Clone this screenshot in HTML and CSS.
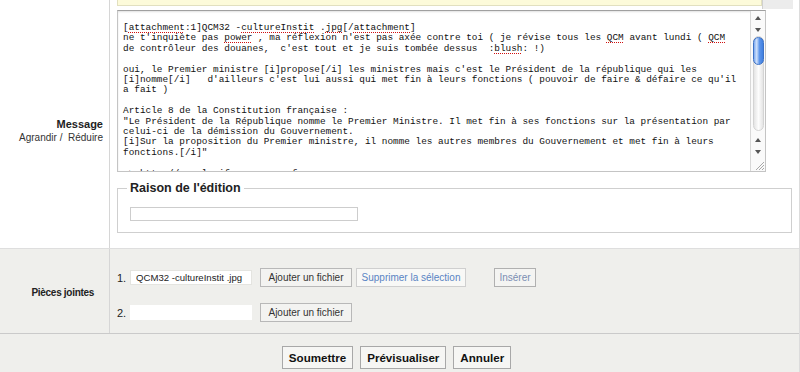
FILE: index.html
```html
<!DOCTYPE html>
<html>
	<head>
		<title>Modifier le message</title>
		<link rel="stylesheet" href="styles.css">
	</head>

	<body>
		<form class="page" name="formulaire">

			<div class="row row_message">
				<div class="row_label">
					<b class="label_titre">Message</b>
					<span class="label_sous">Agrandir /&nbsp; Réduire</span>
				</div>

				<div class="row_champ">
					<div class="apercu_fin">
						<div class="apercu_boite"></div>
						<div class="apercu_barre"></div>
					</div>

					<div class="editeur">
<div class="editeur_texte">[<span class="faute">attachment</span>:1]QCM32 -<span class="faute">cultureInstit</span> .<span class="faute">jpg</span>[/<span class="faute">attachment</span>]
ne t'inquiète pas <span class="faute">power</span> , ma réflexion n'est pas axée contre toi ( je révise tous les <span class="faute">QCM</span> avant lundi ( <span class="faute">QCM</span>
de contrôleur des douanes,  c'est tout et je suis tombée dessus  :<span class="faute">blush</span>: !)

oui, le Premier ministre [i]propose[/i] les ministres mais c'est le Président de la république qui les
[i]nomme[/i]   d'ailleurs c'est lui aussi qui met fin à leurs fonctions ( pouvoir de faire &amp; défaire ce qu'il
a fait )

Article 8 de la Constitution française :
"Le Président de la République nomme le Premier Ministre. Il met fin à ses fonctions sur la présentation par
celui-ci de la démission du Gouvernement.
[i]Sur la proposition du Premier ministre, il nomme les autres membres du Gouvernement et met fin à leurs
fonctions.[/i]"

=> http://www.legifrance.gouv.fr
</div>
						<div class="barre">
							<span class="fleche fleche_haut"></span>
							<span class="fleche fleche_bas"></span>
							<div class="barre_piste"><div class="barre_curseur"></div></div>
							<span class="fleche fleche_haut"></span>
							<span class="fleche fleche_bas"></span>
							<svg class="poignee" width="12" height="12" viewBox="0 0 12 12">
								<path d="M11 3 L3 11 M11 6 L6 11 M11 9 L9 11" stroke="#a8a8a8" stroke-width="1" fill="none"/>
							</svg>
						</div>
					</div>

					<fieldset class="raison">
						<legend>Raison de l'édition</legend>
						<input type="text" class="raison_texte">
					</fieldset>
				</div>
			</div>

			<div class="row row_pieces">
				<div class="row_label label_pieces">
					<b class="label_titre">Pièces jointes</b>
				</div>

				<div class="row_champ champ_pieces">
					<div class="piece">
						<span class="piece_num">1.</span>
						<input type="text" class="piece_nom" value="QCM32 -cultureInstit .jpg">
						<input type="button" class="bouton_fichier" value="Ajouter un fichier">
						<input type="button" class="bouton_lien" value="Supprimer la sélection">
						<input type="button" class="bouton_inserer" value="Insérer">
					</div>
					<div class="piece">
						<span class="piece_num">2.</span>
						<input type="text" class="piece_nom piece_vide">
						<input type="button" class="bouton_fichier" value="Ajouter un fichier">
					</div>
				</div>
			</div>

			<div class="envoi">
				<input type="button" class="bouton_envoi" value="Soumettre">
				<input type="button" class="bouton_envoi" value="Prévisualiser">
				<input type="button" class="bouton_envoi" value="Annuler">
			</div>

		</form>
	</body>
</html>
```

FILE: styles.css
```css
	body
	{
		margin: 0;
		background-color: #efefec;
		font-family: "Liberation Sans", Arial, sans-serif;
		color: #222;
	}

	.page
	{
		width: 799px;
		border-right: 1px solid #dcdcdc;
		margin: 0;
	}

	.row
	{
		display: flex;
	}

	.row_label
	{
		width: 110px;
		border-right: 1px solid #d6d6d6;
		display: flex;
		flex-direction: column;
		justify-content: center;
		align-items: flex-end;
		box-sizing: border-box;
		padding-right: 6px;
	}

	.label_titre
	{
		font-size: 11px;
		line-height: 14px;
		color: #222;
	}

	.label_sous
	{
		font-size: 10px;
		line-height: 13px;
		color: #333;
	}

	.row_message
	{
		background-color: white;
		height: 248px;
	}

	.row_message .row_label
	{
		padding-top: 12px;
	}

	.row_champ
	{
		flex: 1;
		padding: 0 6px 0 7px;
	}

	/* fin de l'apercu au dessus */
	.apercu_fin
	{
		display: flex;
		height: 6px;
		margin-bottom: 4px;
	}

	.apercu_boite
	{
		width: 643px;
		background-color: #fdfbda;
		border: 1px solid #e2e0c0;
		border-top: 0px;
	}

	.apercu_barre
	{
		flex: 1;
		background-color: #ececec;
		border-left: 1px solid #d0d0d0;
		margin-top: -1px;
		height: 10px;
	}

	.editeur
	{
		display: flex;
		width: 649px;
		height: 162px;
		box-sizing: border-box;
		border: 1px solid #c4c4c4;
		border-top-color: #a0a0a0;
		box-shadow: inset 0 1px 2px rgba(0,0,0,0.12);
		overflow: hidden;
	}

	.editeur_texte
	{
		flex: 1;
		padding: 12px 0 0 5px;
		white-space: pre;
		font-family: "Liberation Mono", "Courier New", monospace;
		font-size: 9.4px;
		line-height: 10.4px;
		color: #111;
		overflow: hidden;
	}

	.faute
	{
		text-decoration: underline dotted #d01010;
		text-underline-offset: 2px;
	}

	.barre
	{
		width: 14px;
		border-left: 1px solid #d8d8d8;
		background-color: #fafafa;
		display: flex;
		flex-direction: column;
		align-items: center;
		padding-top: 1px;
	}

	.fleche
	{
		height: 12px;
		width: 14px;
		display: flex;
		justify-content: center;
		align-items: center;
	}

	.fleche::before
	{
		content: "";
		border-left: 3px solid transparent;
		border-right: 3px solid transparent;
	}

	.fleche_haut::before
	{
		border-bottom: 4px solid #555;
	}

	.fleche_bas::before
	{
		border-top: 4px solid #555;
	}

	.barre_piste
	{
		flex: 1;
		width: 11px;
		margin-bottom: 3px;
		border: 1px solid #d4d4d4;
		border-radius: 6px;
		box-sizing: border-box;
		background: linear-gradient(to right, #e4e4e4, #fdfdfd 50%, #e4e4e4);
	}

	.barre_curseur
	{
		height: 26px;
		margin: 0 -1px;
		border: 1px solid #3d72c6;
		border-radius: 6px;
		background: linear-gradient(to right, #7eaaf0, #cfe1fb 30%, #5d95ea 60%, #3f7fe0);
	}

	.poignee
	{
		margin: 1px 0 0 1px;
	}

	.raison
	{
		width: 675px;
		box-sizing: border-box;
		margin: 9px 0 0 0;
		padding: 11px 12px 11px 12px;
		border: 1px solid #cfcfcf;
	}

	.raison legend
	{
		font-size: 12.5px;
		line-height: 15px;
		font-weight: bold;
		color: #222;
		padding: 0 3px;
		margin-left: -3px;
	}

	.raison_texte
	{
		display: block;
		width: 228px;
		height: 14px;
		box-sizing: border-box;
		margin: 0;
		border: 1px solid #cdcdcd;
		padding: 0;
	}

	.row_pieces
	{
		border-top: 1px solid #dedede;
	}

	.label_pieces
	{
		padding-right: 15px;
		padding-top: 3px;
	}

	.label_pieces .label_titre
	{
		font-size: 10px;
		letter-spacing: -0.3px;
	}

	.champ_pieces
	{
		padding-top: 19px;
		padding-bottom: 11px;
		display: flex;
		flex-direction: column;
		gap: 16px;
	}

	.piece
	{
		display: flex;
		align-items: center;
		height: 19px;
	}

	.piece_num
	{
		width: 13px;
		font-size: 11px;
		color: #222;
	}

	input[type="text"].piece_nom
	{
		width: 122px;
		height: 15px;
		box-sizing: border-box;
		margin: 0 8px 0 0;
		padding: 0 5px;
		border: 1px solid #e4e4e0;
		background-color: white;
		font-family: "Liberation Sans", Arial, sans-serif;
		font-size: 9.6px;
		color: #222;
	}

	input[type="text"].piece_vide
	{
		border-color: white;
	}

	input[type="button"]
	{
		font-family: "Liberation Sans", Arial, sans-serif;
		margin: 0;
		box-sizing: border-box;
		cursor: pointer;
	}

	input[type="button"].bouton_fichier
	{
		width: 92px;
		height: 19px;
		padding: 0;
		font-size: 10px;
		color: #333;
		background-color: #f3f3f1;
		border: 1px solid #b8b8b8;
	}

	input[type="button"].bouton_lien
	{
		width: 110px;
		height: 19px;
		padding: 0;
		margin-left: 4px;
		font-size: 10px;
		color: #5a84c4;
		background-color: #f8f8f6;
		border: 1px solid #cfcfcf;
	}

	input[type="button"].bouton_inserer
	{
		width: 42px;
		height: 19px;
		padding: 0;
		margin-left: 28px;
		font-size: 10px;
		color: #7b8eb2;
		background-color: #f4f4f2;
		border: 1px solid #b0b0b0;
	}

	.envoi
	{
		border-top: 1px solid #cacaca;
		padding-top: 12px;
		display: flex;
		justify-content: center;
		gap: 7px;
		height: 40px;
		padding-right: 6px;
	}

	input[type="button"].bouton_envoi
	{
		height: 23px;
		padding: 0 6px;
		font-size: 11.6px;
		font-weight: bold;
		color: #111;
		background-color: #f6f6f4;
		border: 1px solid #a8a8a8;
	}
```
